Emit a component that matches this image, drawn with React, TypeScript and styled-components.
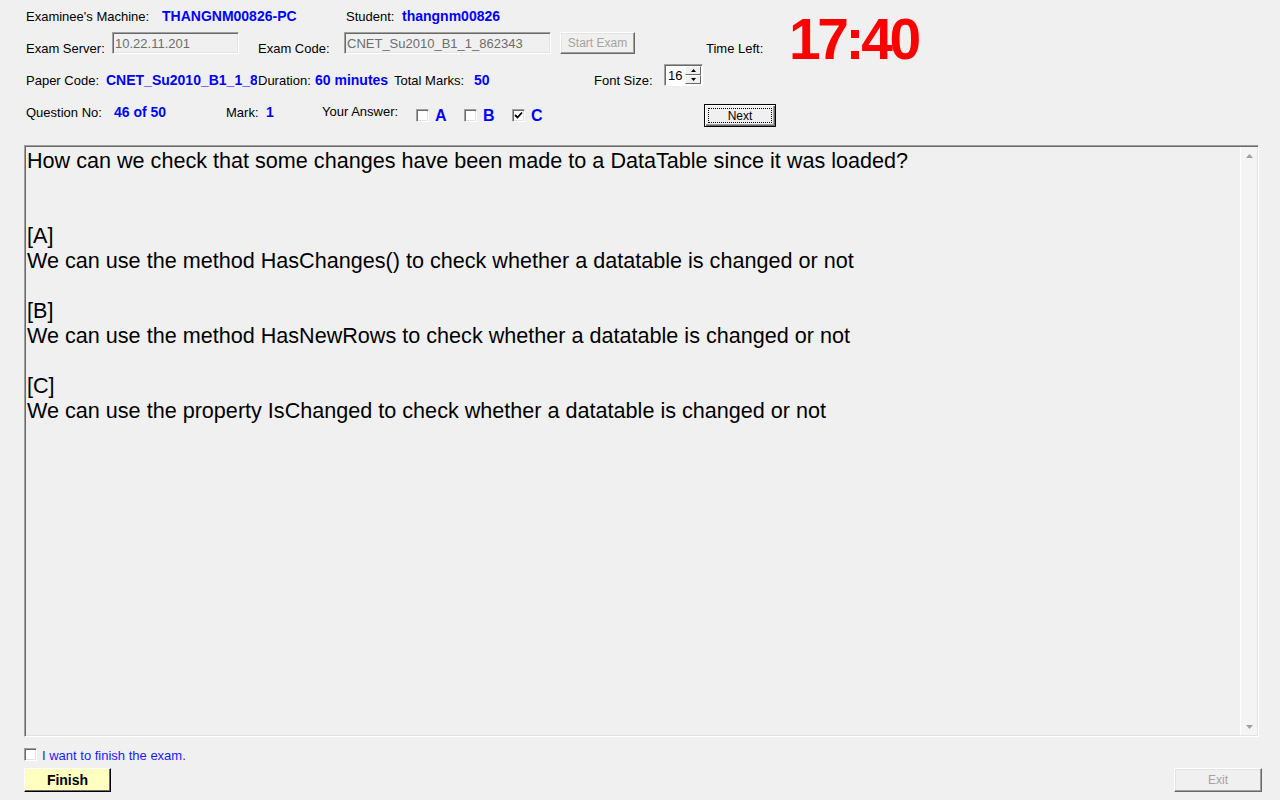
import React from "react";
import styled, { createGlobalStyle } from "styled-components";

const Global = createGlobalStyle`
  html, body { margin: 0; padding: 0; background: #f0f0f0; }
  body { font-family: "Liberation Sans", Arial, sans-serif; color: #000; }
  * { box-sizing: border-box; }
`;

const Window = styled.div`
  width: 1280px;
  height: 800px;
  display: flex;
  flex-direction: column;
  background: #f0f0f0;
  overflow: hidden;
`;

const Header = styled.header`
  display: flex;
  flex-direction: column;
  padding-left: 26px;
`;

const Row = styled.div<{ $top: number; $h: number }>`
  display: flex;
  align-items: flex-start;
  margin-top: ${(p) => p.$top}px;
  height: ${(p) => p.$h}px;
`;

const Label = styled.span<{ $w?: number; $dy?: number; $ml?: number }>`
  flex: none;
  width: ${(p) => (p.$w ? `${p.$w}px` : "auto")};
  margin-top: ${(p) => p.$dy ?? 0}px;
  margin-left: ${(p) => p.$ml ?? 0}px;
  font-size: 13px;
  line-height: 15px;
  white-space: nowrap;
  overflow: hidden;
`;

const Value = styled(Label)`
  font-weight: bold;
  font-size: 14px;
  color: #0000ff;
`;

const Spacer = styled.span<{ $w: number }>`
  flex: none;
  width: ${(p) => p.$w}px;
`;

const TextBox = styled.input<{ $w: number }>`
  flex: none;
  width: ${(p) => p.$w}px;
  height: 22px;
  margin: 0;
  padding: 0 2px;
  font-family: inherit;
  font-size: 13px;
  color: #6d6d6d;
  -webkit-text-fill-color: #6d6d6d;
  background: #f0f0f0;
  border: 1px solid;
  border-color: #a0a0a0 #fff #fff #a0a0a0;
  box-shadow: inset 1px 1px 0 #696969, inset -1px -1px 0 #e3e3e3;
  outline: none;
`;

const WinButton = styled.button<{ $w: number; $h: number; $variant?: "default" | "disabled" | "finish" }>`
  flex: none;
  width: ${(p) => p.$w}px;
  height: ${(p) => p.$h}px;
  margin: 0;
  padding: 0;
  font-family: inherit;
  font-size: ${(p) => (p.$variant === "finish" ? "14px" : "12px")};
  font-weight: ${(p) => (p.$variant === "finish" ? "bold" : "normal")};
  color: ${(p) => (p.$variant === "disabled" ? "#a3a3a3" : "#000")};
  background: ${(p) => (p.$variant === "finish" ? "#ffffc0" : "#f0f0f0")};
  border: 1px solid;
  border-color: ${(p) =>
    p.$variant === "default"
      ? "#000"
      : p.$variant === "finish"
      ? "#fff #000 #000 #fff"
      : "#fff #696969 #696969 #fff"};
  box-shadow: ${(p) =>
    p.$variant === "default"
      ? "inset 1px 1px 0 #fff, inset -1px -1px 0 #696969, inset -2px -2px 0 #a0a0a0"
      : p.$variant === "finish"
      ? "inset -1px -1px 0 #696969"
      : "inset -1px -1px 0 #a0a0a0, inset 1px 1px 0 #e3e3e3"};
  outline: ${(p) => (p.$variant === "default" ? "1px dotted #000" : "none")};
  outline-offset: -5px;
  cursor: default;
`;

const Timer = styled.span`
  flex: none;
  margin-top: -21px;
  font-size: 57px;
  line-height: 57px;
  font-weight: bold;
  color: #ff0000;
  letter-spacing: -3.4px;
`;

const SpinBox = styled.div`
  flex: none;
  width: 39px;
  height: 22px;
  display: flex;
  background: #fff;
  border: 1px solid;
  border-color: #a0a0a0 #fff #fff #a0a0a0;
  box-shadow: inset 1px 1px 0 #696969;
`;

const SpinValue = styled.span`
  flex: 1;
  padding: 3px 0 0 3px;
  font-size: 13px;
  line-height: 15px;
`;

const SpinButtons = styled.div`
  flex: none;
  width: 17px;
  display: flex;
  flex-direction: column;
  padding: 1px 1px 1px 0;
`;

const SpinButton = styled.div`
  flex: 1;
  display: flex;
  align-items: center;
  justify-content: center;
  background: #f0f0f0;
  border: 1px solid;
  border-color: #fff #696969 #696969 #fff;
`;

const CheckBox = styled.span<{ $dy?: number }>`
  flex: none;
  width: 13px;
  height: 13px;
  margin-top: ${(p) => p.$dy ?? 0}px;
  display: flex;
  align-items: center;
  justify-content: center;
  background: #fff;
  border: 1px solid;
  border-color: #a0a0a0 #fff #fff #a0a0a0;
  box-shadow: inset 1px 1px 0 #696969, inset -1px -1px 0 #e3e3e3;
`;

const Options = styled.div`
  flex: none;
  width: 288px;
  display: flex;
  align-items: flex-start;
`;

const Option = styled.div`
  flex: none;
  width: 48px;
  display: flex;
  align-items: flex-start;
  gap: 6px;
`;

const OptionLetter = styled.span`
  margin-top: 3px;
  font-size: 16px;
  line-height: 18px;
  font-weight: bold;
  color: #0000ff;
`;

const Panel = styled.section`
  margin: 18px 0 0 24px;
  width: 1235px;
  height: 592px;
  display: flex;
  border: 1px solid;
  border-color: #a0a0a0 #fff #fff #a0a0a0;
  box-shadow: inset 1px 1px 0 #696969, inset -1px -1px 0 #e3e3e3;
  padding: 1px;
`;

const QuestionText = styled.div`
  flex: 1;
  padding: 1px 0 0 1px;
  font-size: 21.6px;
  line-height: 25px;
  white-space: pre-line;
  color: #000;
`;

const ScrollBar = styled.div`
  flex: none;
  width: 17px;
  display: flex;
  flex-direction: column;
  justify-content: space-between;
  background: #f4f4f4;
  border-left: 1px solid #fff;
`;

const ScrollArrow = styled.div`
  height: 17px;
  display: flex;
  align-items: center;
  justify-content: center;
`;

const FinishCheckRow = styled.div`
  display: flex;
  align-items: center;
  gap: 5px;
  margin: 11px 0 0 24px;
  height: 13px;
`;

const FinishLabel = styled.span`
  font-size: 13px;
  line-height: 15px;
  margin-top: 1px;
  color: #1a1aff;
`;

const ButtonRow = styled.div`
  display: flex;
  justify-content: space-between;
  margin-top: 7px;
  padding: 0 18px 0 24px;
`;

const Tri = ({ up, color, w = 7 }: { up: boolean; color: string; w?: number }) => {
  const h = Math.ceil(w / 2);
  return (
    <svg width={w} height={h} viewBox={`0 0 ${w} ${h}`}>
      <polygon points={up ? `0,${h} ${w},${h} ${w / 2},0` : `0,0 ${w},0 ${w / 2},${h}`} fill={color} />
    </svg>
  );
};

const Tick = () => (
  <svg width="9" height="9" viewBox="0 0 9 9">
    <path d="M1 4 L3.5 6.5 L8 1.5" stroke="#000" strokeWidth="1.8" fill="none" />
  </svg>
);

const question = `How can we check that some changes have been made to a DataTable since it was loaded?


[A]
We can use the method HasChanges() to check whether a datatable is changed or not

[B]
We can use the method HasNewRows to check whether a datatable is changed or not

[C]
We can use the property IsChanged to check whether a datatable is changed or not`;

const answers = [
  { key: "A", checked: false },
  { key: "B", checked: false },
  { key: "C", checked: true },
];

export default function App() {
  return (
    <Window>
      <Global />
      <Header>
        <Row $top={9} $h={15}>
          <Label $w={136}>Examinee's Machine:</Label>
          <Value $w={184}>THANGNM00826-PC</Value>
          <Label $w={56}>Student:</Label>
          <Value>thangnm00826</Value>
        </Row>
        <Row $top={8} $h={22}>
          <Label $w={86} $dy={9}>Exam Server:</Label>
          <TextBox $w={127} value="10.22.11.201" readOnly tabIndex={-1} />
          <Spacer $w={19} />
          <Label $w={86} $dy={9}>Exam Code:</Label>
          <TextBox $w={207} value="CNET_Su2010_B1_1_862343" readOnly tabIndex={-1} />
          <Spacer $w={9} />
          <WinButton $w={75} $h={22} $variant="disabled">Start Exam</WinButton>
          <Spacer $w={71} />
          <Label $w={83} $dy={9}>Time Left:</Label>
          <Timer>17:40</Timer>
        </Row>
        <Row $top={10} $h={22}>
          <Label $w={80} $dy={9}>Paper Code:</Label>
          <Value $w={151} $dy={9}>CNET_Su2010_B1_1_862343</Value>
          <Label $w={57} $dy={9} $ml={1}>Duration:</Label>
          <Value $w={79} $dy={9}>60 minutes</Value>
          <Label $w={80} $dy={9}>Total Marks:</Label>
          <Value $w={120} $dy={9}>50</Value>
          <Label $w={70} $dy={9}>Font Size:</Label>
          <SpinBox>
            <SpinValue>16</SpinValue>
            <SpinButtons>
              <SpinButton><Tri up color="#000" w={5} /></SpinButton>
              <SpinButton><Tri up={false} color="#000" w={5} /></SpinButton>
            </SpinButtons>
          </SpinBox>
        </Row>
        <Row $top={18} $h={23}>
          <Label $w={88} $dy={1}>Question No:</Label>
          <Value $w={112} $dy={1}>46 of 50</Value>
          <Label $w={40} $dy={1}>Mark:</Label>
          <Value $w={56} $dy={1}>1</Value>
          <Label $w={94} $dy={0}>Your Answer:</Label>
          <Options>
            {answers.map((a) => (
              <Option key={a.key}>
                <CheckBox $dy={5}>{a.checked && <Tick />}</CheckBox>
                <OptionLetter>{a.key}</OptionLetter>
              </Option>
            ))}
          </Options>
          <WinButton $w={72} $h={23} $variant="default">Next</WinButton>
        </Row>
      </Header>

      <Panel>
        <QuestionText>{question}</QuestionText>
        <ScrollBar>
          <ScrollArrow><Tri up color="#a0a0a0" /></ScrollArrow>
          <ScrollArrow><Tri up={false} color="#a0a0a0" /></ScrollArrow>
        </ScrollBar>
      </Panel>

      <FinishCheckRow>
        <CheckBox />
        <FinishLabel>I want to finish the exam.</FinishLabel>
      </FinishCheckRow>
      <ButtonRow>
        <WinButton $w={87} $h={24} $variant="finish">Finish</WinButton>
        <WinButton $w={88} $h={24} $variant="disabled">Exit</WinButton>
      </ButtonRow>
    </Window>
  );
}
